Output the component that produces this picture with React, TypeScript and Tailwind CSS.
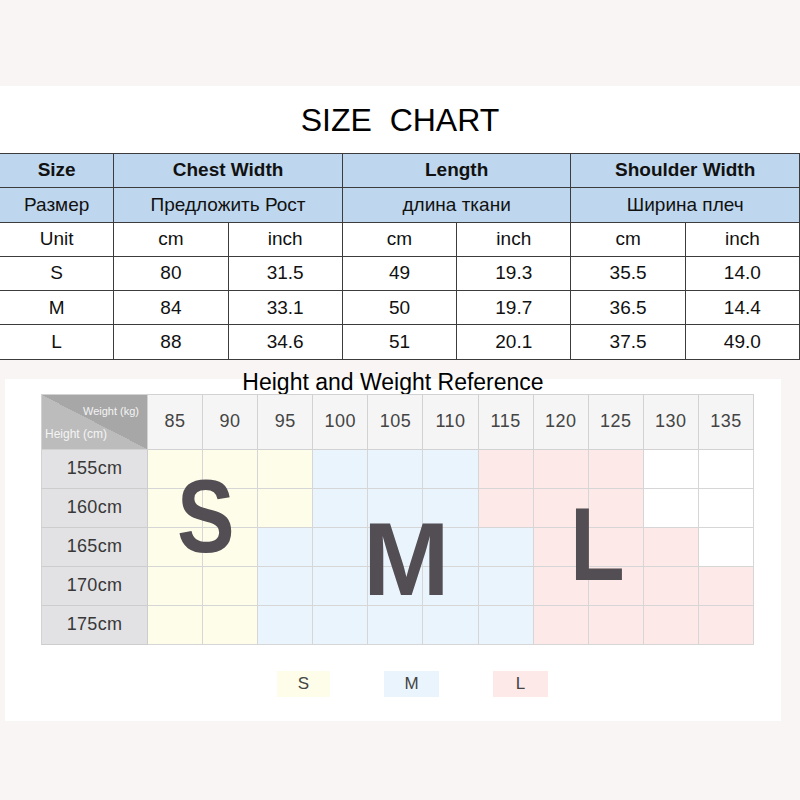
import React from 'react';

const weights = [85, 90, 95, 100, 105, 110, 115, 120, 125, 130, 135];
const heights = ['155cm', '160cm', '165cm', '170cm', '175cm'];

// one letter per weight column: S / M / L zone, W = no size
const zones = ['SSSMMMLLLWW', 'SSSMMMLLLWW', 'SSMMMMMLLLW', 'SSMMMMMLLLL', 'SSMMMMMLLLL'];

const zoneBg: Record<string, string> = {
  S: 'bg-[#fdfde9]',
  M: 'bg-[#eaf4fd]',
  L: 'bg-[#fde9e7]',
  W: 'bg-white',
};

const rows = [
  ['S', '80', '31.5', '49', '19.3', '35.5', '14.0'],
  ['M', '84', '33.1', '50', '19.7', '36.5', '14.4'],
  ['L', '88', '34.6', '51', '20.1', '37.5', '49.0'],
];

const cell = 'flex items-center justify-center border-r border-b border-[#3c3c3c] h-[34.3px]';
const head = `${cell} bg-[#bfd7ee]`;

function SizeTable() {
  return (
    <div className="grid w-[800px] grid-cols-7 border-t border-[#3c3c3c] text-[19px] text-[#111]">
      <div className={`${head} font-bold`}>Size</div>
      <div className={`${head} col-span-2 font-bold`}>Chest Width</div>
      <div className={`${head} col-span-2 font-bold`}>Length</div>
      <div className={`${head} col-span-2 font-bold`}>Shoulder Width</div>

      <div className={head}>Размер</div>
      <div className={`${head} col-span-2`}>Предложить Рост</div>
      <div className={`${head} col-span-2`}>длина ткани</div>
      <div className={`${head} col-span-2`}>Ширина плеч</div>

      <div className={cell}>Unit</div>
      {['cm', 'inch', 'cm', 'inch', 'cm', 'inch'].map((u, i) => (
        <div key={i} className={cell}>
          {u}
        </div>
      ))}

      {rows.map((r) =>
        r.map((v, i) => (
          <div key={r[0] + i} className={cell}>
            {v}
          </div>
        ))
      )}
    </div>
  );
}

function ReferenceGrid() {
  return (
    <div className="relative ml-[36px] grid w-[713px] grid-cols-[106px_repeat(11,1fr)] grid-rows-[55px_repeat(5,39px)] border-t border-l border-[#d2d2d2]">
      <div className="relative border-r border-b border-[#d2d2d2] bg-[linear-gradient(to_top_right,#bcbcbc_50%,#a7a7a7_50%)] text-[#f4f4f4]">
        <span className="absolute top-[8px] right-[8px] text-[11px]">Weight (kg)</span>
        <span className="absolute bottom-[6px] left-[3px] text-[12px]">Height (cm)</span>
      </div>
      {weights.map((w) => (
        <div
          key={w}
          className="flex items-center justify-center border-r border-b border-[#d2d2d2] bg-[#f5f5f5] text-[18px] tracking-[0.5px] text-[#444]"
        >
          {w}
        </div>
      ))}

      {heights.map((h, r) => (
        <React.Fragment key={h}>
          <div className="flex items-center justify-center border-r border-b border-[#cdcdcd] bg-[#e2e2e4] text-[18px] tracking-[0.3px] text-[#383838]">
            {h}
          </div>
          {zones[r].split('').map((z, c) => (
            <div key={c} className={`border-r border-b border-[#d6d6d6] ${zoneBg[z]}`} />
          ))}
        </React.Fragment>
      ))}

      {/* big size letters over the zones */}
      <span className="absolute left-[135px] top-[69px] origin-left scale-x-[0.83] text-[104px] leading-none font-bold text-[#524e53]">
        S
      </span>
      <span className="absolute left-[321px] top-[112px] text-[104px] leading-none font-bold text-[#524e53]">M</span>
      <span className="absolute left-[528px] top-[97px] origin-left scale-x-[0.86] text-[104px] leading-none font-bold text-[#524e53]">
        L
      </span>
    </div>
  );
}

export default function App() {
  return (
    <div className="h-[800px] w-[800px] overflow-hidden bg-[#f8f5f4] font-['Liberation_Sans',Arial,sans-serif]">
      <div className="h-[86px]" />

      <div className="bg-white">
        <div className="flex h-[67px] justify-center pt-[18px]">
          <h1 className="text-[32px] leading-none text-black whitespace-pre">SIZE  CHART</h1>
        </div>
        <SizeTable />
      </div>

      <div className="h-[19px]" />

      <div className="ml-[5px] flex h-[342px] w-[776px] flex-col bg-white">
        <div className="-mt-[8px] mb-[1px] flex h-[22px] shrink-0 justify-center">
          <span className="text-[23px] leading-none text-black">Height and Weight Reference</span>
        </div>
        <ReferenceGrid />

        <div className="mt-[26px] flex gap-[54px] pl-[272px] text-[17px] text-[#444]">
          <div className="flex h-[26px] w-[53px] items-center justify-center bg-[#fdfde9]">S</div>
          <div className="flex h-[26px] w-[55px] items-center justify-center bg-[#eaf4fd]">M</div>
          <div className="flex h-[26px] w-[55px] items-center justify-center bg-[#fde9e7]">L</div>
        </div>
      </div>
    </div>
  );
}
